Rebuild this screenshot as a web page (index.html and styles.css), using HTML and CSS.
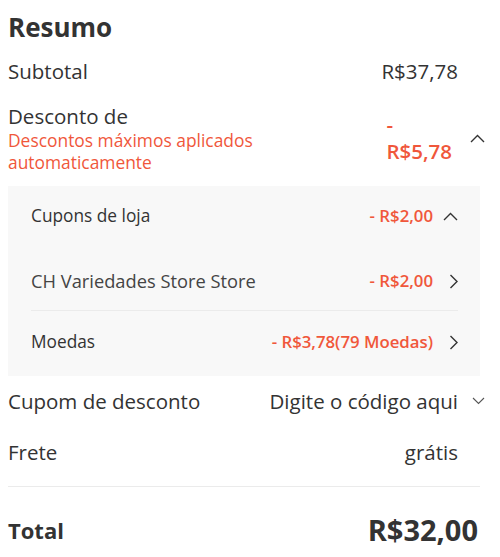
FILE: index.html
```html
<!DOCTYPE html>
<html lang="pt-BR">

<head>
    <meta charset="utf-8">
    <meta name="viewport" content="width=device-width, initial-scale=1.0">
    <title>Resumo</title>
    <link rel="stylesheet" href="styles.css">
</head>

<body>
    <div class="summary">
        <h2 class="title">Resumo</h2>

        <div class="row row-subtotal">
            <span class="label">Subtotal</span>
            <span class="value">R$37,78</span>
            <span class="icon"></span>
        </div>

        <div class="row row-discount">
            <div class="label">
                <div class="label-main">Desconto de</div>
                <div class="note">Descontos máximos aplicados<br>automaticamente</div>
            </div>
            <div class="value red strong">
                <span class="dash">-</span>
                <span>R$5,78</span>
            </div>
            <span class="icon">
                <svg width="15" height="9" viewBox="0 0 15 9"><path d="M1 8 L7.5 1.5 L14 8" fill="none" stroke="#333" stroke-width="1.4"/></svg>
            </span>
        </div>

        <div class="panel">
            <div class="sub-row first">
                <span class="sub-label">Cupons de loja</span>
                <span class="sub-value">- R$2,00</span>
                <span class="sub-icon">
                    <svg width="15" height="9" viewBox="0 0 15 9"><path d="M1 8 L7.5 1.5 L14 8" fill="none" stroke="#333" stroke-width="1.4"/></svg>
                </span>
            </div>
            <div class="sub-row store">
                <span class="sub-label big">CH Variedades Store Store</span>
                <span class="sub-value">- R$2,00</span>
                <span class="sub-icon">
                    <svg width="9" height="15" viewBox="0 0 9 15"><path d="M1.5 1 L8 7.5 L1.5 14" fill="none" stroke="#333" stroke-width="1.4"/></svg>
                </span>
            </div>
            <div class="sub-row last">
                <span class="sub-label">Moedas</span>
                <span class="sub-value">- R$3,78(79 Moedas)</span>
                <span class="sub-icon">
                    <svg width="9" height="15" viewBox="0 0 9 15"><path d="M1.5 1 L8 7.5 L1.5 14" fill="none" stroke="#333" stroke-width="1.4"/></svg>
                </span>
            </div>
        </div>

        <div class="row row-coupon">
            <span class="label">Cupom de desconto</span>
            <span class="value">Digite o código aqui</span>
            <span class="icon">
                <svg width="13" height="8" viewBox="0 0 13 8"><path d="M1 1 L6.5 6.5 L12 1" fill="none" stroke="#555" stroke-width="1.1"/></svg>
            </span>
        </div>

        <div class="row row-frete">
            <span class="label">Frete</span>
            <span class="value">grátis</span>
            <span class="icon"></span>
        </div>

        <div class="total">
            <span class="total-label">Total</span>
            <span class="total-value">R$32,00</span>
        </div>
    </div>
</body>

</html>
```

FILE: styles.css
```css
body {
    margin: 0;
    background: #fff;
    font-family: 'Open Sans', 'Noto Sans', sans-serif;
    color: #333;
}

.summary {
    width: 472px;
    padding: 0 20px 0 8px;
}

.title {
    margin: 0;
    padding: 10px 0 6px 0;
    font-size: 26px;
    line-height: 34px;
    font-weight: 700;
}

.row {
    display: grid;
    grid-template-columns: 1fr auto 22px;
    align-items: center;
    font-size: 20.5px;
}

.icon {
    display: flex;
    align-items: center;
    justify-content: flex-end;
    margin-right: -5px;
}

.icon svg {
    display: block;
}

.row-subtotal {
    height: 42px;
}

.row-discount {
    padding: 11px 0 13px 0;
}

.label-main {
    line-height: 26px;
}

.note {
    color: #f0573b;
    font-size: 17.4px;
    line-height: 22px;
}

.red {
    color: #f0573b;
}

.strong {
    font-weight: 600;
}

.row-discount .value {
    display: flex;
    flex-direction: column;
    line-height: 27px;
    margin-right: 6px;
}

.panel {
    background: #f8f8f8;
    padding: 0 22px 0 23px;
}

.sub-row {
    display: grid;
    grid-template-columns: 1fr auto 25px;
    align-items: center;
    line-height: 30px;
    font-size: 17.3px;
}

.sub-row.first {
    padding: 15px 0 20px 0;
}

.sub-row.store {
    padding: 15px 0 14px 0;
    border-bottom: 1px solid #ebebeb;
}

.sub-row.last {
    padding: 16px 0 19px 0;
}

.sub-label.big {
    font-size: 18.3px;
    color: #444;
}

.sub-value {
    color: #f0573b;
    font-weight: 600;
    font-size: 16.8px;
}

.sub-icon {
    display: flex;
    justify-content: flex-end;
    align-items: center;
}

.row-coupon {
    padding: 10px 0;
    line-height: 30px;
}

.row-frete {
    padding: 11px 0 19px 0;
    line-height: 30px;
    border-bottom: 1px solid #ebebeb;
}

.total {
    display: flex;
    justify-content: space-between;
    align-items: center;
    padding-top: 23px;
    line-height: 40px;
    font-weight: 700;
}

.total-label {
    font-size: 22px;
}

.total-value {
    font-size: 29px;
    margin-right: 2px;
}
```
